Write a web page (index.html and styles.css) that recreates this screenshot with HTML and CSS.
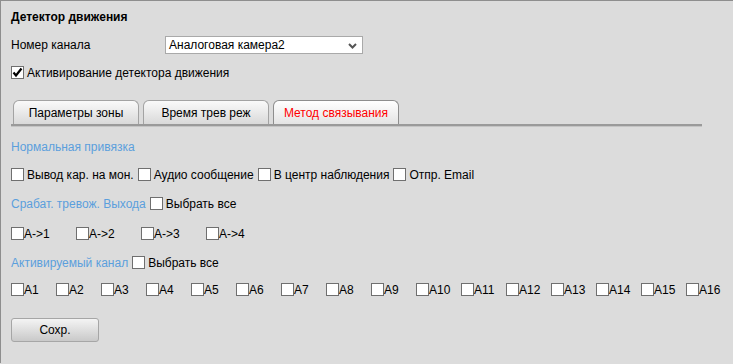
FILE: index.html
```html
<!DOCTYPE html>
<html lang="ru">
<head>
  <meta charset="UTF-8">
  <title>Детектор движения</title>
  <link rel="stylesheet" href="styles.css">
</head>
<body>
  <div class="panel">
    <div class="title">Детектор движения</div>

    <div class="row channel-row">
      <span class="label">Номер канала</span>
      <div class="select">
        <span>Аналоговая камера2</span>
        <svg class="chevron" width="9" height="6" viewBox="0 0 9 6"><path d="M1 1 L4.5 4.5 L8 1" fill="none" stroke="#555" stroke-width="2"/></svg>
      </div>
    </div>

    <div class="row activate-row">
      <span class="cb checked"><svg width="11" height="11" viewBox="0 0 11 11"><path d="M1.5 5.5 L4 8.5 L9.5 1.5" fill="none" stroke="#000" stroke-width="2.2"/></svg></span>
      <span class="cb-text">Активирование детектора движения</span>
    </div>

    <div class="tabs">
      <div class="tab">Параметры зоны</div>
      <div class="tab">Время трев реж</div>
      <div class="tab active">Метод связывания</div>
    </div>

    <div class="heading h-normal">Нормальная привязка</div>

    <div class="row opts-row">
      <span class="cb"></span><span class="cb-text">Вывод кар. на мон.</span>
      <span class="cb"></span><span class="cb-text">Аудио сообщение</span>
      <span class="cb"></span><span class="cb-text">В центр наблюдения</span>
      <span class="cb"></span><span class="cb-text">Отпр. Email</span>
    </div>

    <div class="row h-alarm">
      <span class="heading">Срабат. тревож. Выхода</span>
      <span class="cb"></span><span class="cb-text">Выбрать все</span>
    </div>

    <div class="row grid-row out-row" id="outRow"></div>

    <div class="row h-chan">
      <span class="heading">Активируемый канал</span>
      <span class="cb"></span><span class="cb-text">Выбрать все</span>
    </div>

    <div class="row grid-row chan-row" id="chanRow"></div>

    <button class="save-btn">Сохр.</button>
  </div>

  <script>
    function fillRow(id, items) {
      document.getElementById(id).innerHTML = items.map(t =>
        `<span class="item"><span class="cb"></span>${t}</span>`
      ).join('');
    }
    fillRow('outRow', ['A-&gt;1', 'A-&gt;2', 'A-&gt;3', 'A-&gt;4']);
    const chans = [];
    for (let i = 1; i <= 16; i++) chans.push('A' + i);
    fillRow('chanRow', chans);
  </script>
</body>
</html>
```

FILE: styles.css
```css
body {
  margin: 0;
  background: #dcdcdc;
  font-family: "Liberation Sans", Arial, sans-serif;
  font-size: 12px;
  color: #000;
}
.panel {
  height: 363px;
  border-top: 1px solid #8e8e8e;
  border-left: 1px solid #8e8e8e;
  padding: 8px 0 0 10px;
  box-sizing: border-box;
}
.title {
  font-weight: bold;
  height: 16px;
  line-height: 16px;
}
.row {
  display: flex;
  align-items: center;
  height: 13px;
  white-space: nowrap;
}
.channel-row {
  margin-top: 11px;
  height: 18px;
}
.channel-row .label {
  width: 154px;
}
.select {
  width: 198px;
  height: 18px;
  box-sizing: border-box;
  background: #fff;
  border: 1px solid #a9a9a9;
  display: flex;
  align-items: center;
  justify-content: space-between;
  padding: 0 5px 0 3px;
}
.chevron {
  margin-top: 2px;
}
.activate-row {
  margin-top: 12px;
}
.cb {
  display: inline-flex;
  align-items: center;
  justify-content: center;
  width: 13px;
  height: 13px;
  box-sizing: border-box;
  border: 1px solid #6f6f6f;
  background: #fff;
  flex: none;
}
.cb-text {
  margin: 0 4px 0 3px;
}
.tabs {
  margin-top: 21px;
  width: 691px;
  display: flex;
  gap: 4px;
  padding-left: 2px;
  box-sizing: border-box;
  border-bottom: 2px solid #9a9a9a;
  box-shadow: 0 1px 0 #c4c4c4;
}
.tab {
  width: 126px;
  height: 24px;
  box-sizing: border-box;
  border: 1px solid #a3a3a3;
  border-bottom: none;
  border-radius: 6px 6px 0 0;
  background: linear-gradient(#fafafa, #d9d9d9);
  text-align: center;
  line-height: 24px;
}
.tab.active {
  color: #ff0000;
  background: linear-gradient(#ffffff, #e4e4e4);
  border-color: #8e8e8e;
}
.heading {
  color: #5b9fdd;
}
.h-normal {
  margin-top: 14px;
  height: 14px;
  line-height: 14px;
}
.opts-row {
  margin-top: 14px;
}
.h-alarm {
  margin-top: 16px;
}
.h-alarm .heading,
.h-chan .heading {
  margin-right: 4px;
}
.out-row {
  margin-top: 17px;
}
.h-chan {
  margin-top: 16px;
}
.chan-row {
  margin-top: 14px;
}
.item {
  display: inline-flex;
  align-items: center;
}
.out-row .item {
  width: 65px;
}
.chan-row .item {
  width: 45px;
}
.save-btn {
  display: block;
  margin-top: 22px;
  width: 88px;
  height: 24px;
  font-family: inherit;
  font-size: 12px;
  color: #000;
  border: 1px solid #a6a6a6;
  border-radius: 3px;
  background: linear-gradient(#f4f4f4, #c9c9c9);
  padding: 0;
}
```
